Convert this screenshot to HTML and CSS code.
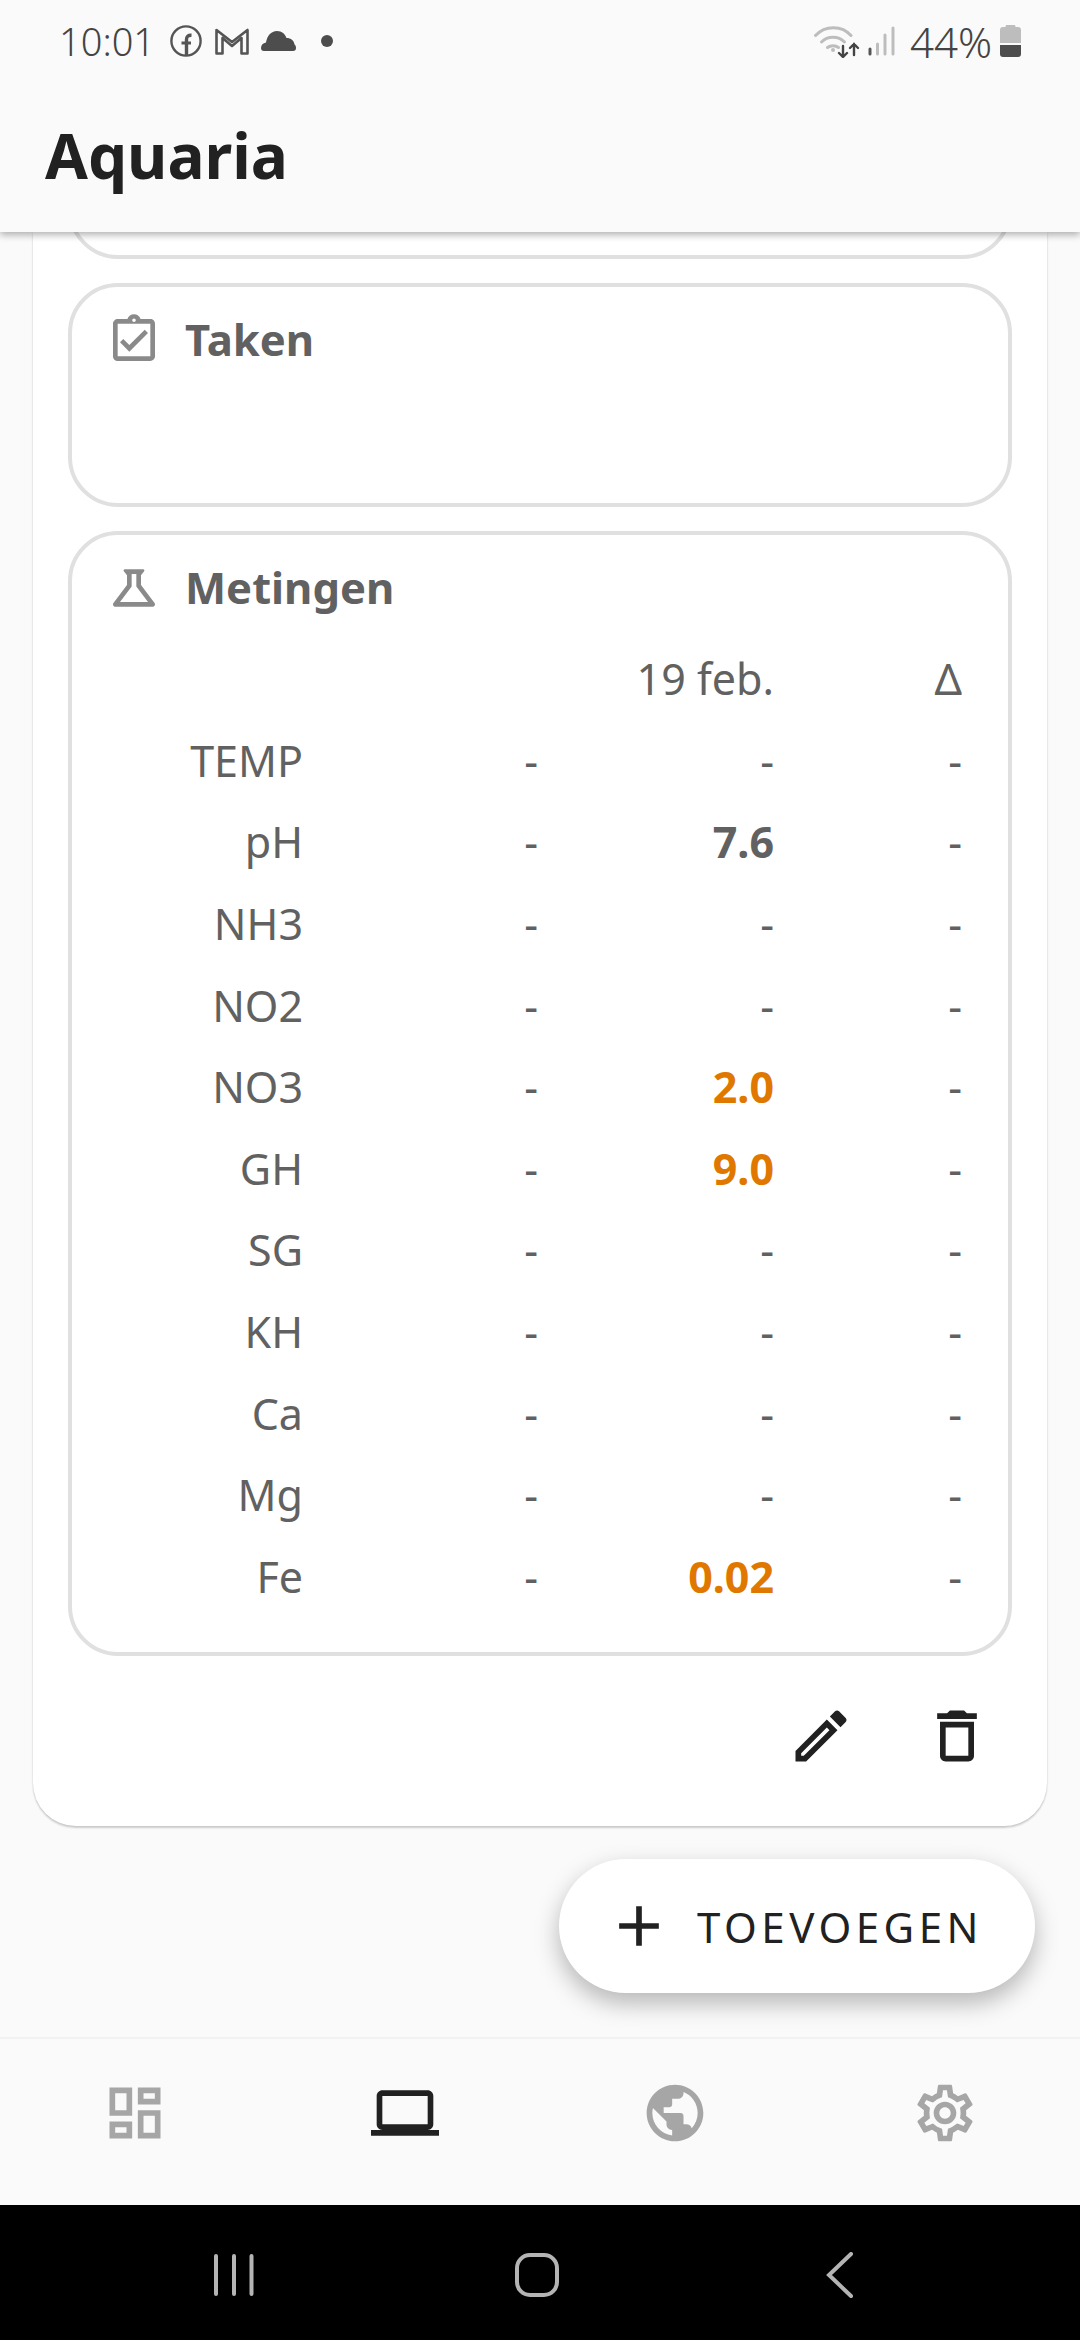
FILE: index.html
```html
<!DOCTYPE html>
<html lang="nl">
<head>
    <meta charset="UTF-8">
    <meta name="viewport" content="width=device-width, initial-scale=1.0">
    <title>Aquaria</title>
    <link rel="stylesheet" href="styles.css">
</head>
<body>
    <div class="app">
        <header class="topbar">
            <div class="status-bar">
                <div class="status-left">
                    <span class="status-text">10:01</span>
                    <svg class="st-fb" width="32" height="32" viewBox="0 0 32 32" fill="none" stroke="#555" stroke-width="2.4"><circle cx="16" cy="16" r="14.6"/><path d="M16.5 30.5V14.5c0-3 1.5-4.5 5-4.3" stroke-width="3.4"/><path d="M11.5 18h9.5" stroke-width="3"/></svg>
                    <svg class="st-mail" width="34" height="27" viewBox="0 0 34 27" fill="none" stroke="#555" stroke-width="2.6" stroke-linejoin="round"><path d="M1.5 2 17 14 32.500 2v23.500h-6V10L17 18 7.500 10v15.500h-6z"/></svg>
                    <svg class="st-cloud" width="35" height="20" viewBox="0 0 35 20" fill="#4d4d4d"><path d="M3 20c-2 0-3-1.200-3-3 0-3 2-5 5-5.500C6 5 10 0 16 0c5 0 8 3 9.500 7C30 7 33 9.500 33.500 13.500c1 .5 1.500 2 1.500 3.500 0 2-1 3-3 3z"/></svg>
                    <span class="st-dot"></span>
                </div>
                <div class="status-right">
                    <svg width="46" height="34" viewBox="0 0 46 34" fill="none" stroke-linecap="round"><g stroke="#bdbdbd" stroke-width="3"><path d="M1.500 11.500C11 1 28 1 37 11.500"/><path d="M7.500 18c6-6.500 17-6.500 23 0"/><path d="M13.500 23.500c3-2.500 8-2.500 11 0"/></g><circle cx="19" cy="26" r="2" fill="#bdbdbd"/><g stroke="#444" stroke-width="2.400"><path d="M29 22v11M25 29l4 4 4-4"/><path d="M40 31V20M36 24l4-4 4 4"/></g></svg>
                    <svg class="st-signal" width="28" height="30" viewBox="0 0 28 30" fill="none" stroke-width="3" stroke-linecap="round"><path d="M2 23v5" stroke="#555"/><path d="M9.500 18v10M17 9v19M25 2v26" stroke="#bdbdbd"/></svg>
                    <span class="status-text status-pct">44%</span>
                    <svg class="st-battery" width="21" height="32" viewBox="0 0 21 32"><path d="M7 0h7c1 0 1.500.5 1.500 2H18c2 0 3 1 3 3v13H0V5c0-2 1-3 3-3h2.500C5.500.5 6 0 7 0z" fill="#bdbdbd"/><path d="M0 20h21v9c0 2-1 3-3 3H3c-2 0-3-1-3-3z" fill="#4d4d4d"/></svg>
                </div>
            </div>
            <h1 class="page-title">Aquaria</h1>
        </header>

        <main class="content">
            <div class="panel">
                <section class="box box-stub"></section>

                <section class="box box-taken">
                    <div class="box-head">
                        <svg class="box-icon" viewBox="0 0 24 24"><path d="M18 9l-1.410-1.420L10 14.170l-2.590-2.580L6 13l4 4zm1-6h-4.180C14.400 1.840 13.300 1 12 1c-1.300 0-2.400.84-2.820 2H5c-.14 0-.27.01-.4.04-.39.08-.74.28-1.010.55-.18.18-.33.4-.43.64-.1.23-.16.49-.16.77v14c0 .27.06.54.16.78s.25.45.43.64c.27.27.62.47 1.010.55.13.02.26.03.4.03h14c1.100 0 2-.9 2-2V5c0-1.100-.9-2-2-2zm-7-.25c.41 0 .75.34.75.75s-.34.75-.75.75-.75-.34-.75-.75.34-.75.75-.75zM19 19H5V5h14v14z"/></svg>
                        <h2>Taken</h2>
                    </div>
                </section>

                <section class="box box-metingen">
                    <div class="box-head">
                        <svg class="box-icon" viewBox="0 0 24 24"><path d="M13 11.330 18 18H6l5-6.670V6h2m2.960-2H8.040c-.42 0-.65.48-.39.81L9 6.500v4.170L3.200 18.400c-.49.66-.02 1.600.8 1.600h16c.82 0 1.290-.94.8-1.600L15 10.670V6.500l1.350-1.690c.26-.33.03-.81-.39-.81z"/></svg>
                        <h2>Metingen</h2>
                    </div>
                    <div class="m-table">
                        <div class="m-row"><span></span><span></span><span>19 feb.</span><span>Δ</span></div>
                        <div class="m-row"><span>TEMP</span><span>-</span><span>-</span><span>-</span></div>
                        <div class="m-row"><span>pH</span><span>-</span><span class="val">7.6</span><span>-</span></div>
                        <div class="m-row"><span>NH3</span><span>-</span><span>-</span><span>-</span></div>
                        <div class="m-row"><span>NO2</span><span>-</span><span>-</span><span>-</span></div>
                        <div class="m-row"><span>NO3</span><span>-</span><span class="val warn">2.0</span><span>-</span></div>
                        <div class="m-row"><span>GH</span><span>-</span><span class="val warn">9.0</span><span>-</span></div>
                        <div class="m-row"><span>SG</span><span>-</span><span>-</span><span>-</span></div>
                        <div class="m-row"><span>KH</span><span>-</span><span>-</span><span>-</span></div>
                        <div class="m-row"><span>Ca</span><span>-</span><span>-</span><span>-</span></div>
                        <div class="m-row"><span>Mg</span><span>-</span><span>-</span><span>-</span></div>
                        <div class="m-row"><span>Fe</span><span>-</span><span class="val warn">0.02</span><span>-</span></div>
                    </div>
                </section>

                <div class="actions">
                    <svg class="action-icon" viewBox="0 0 24 24"><path d="M14.060 9.020l.92.92L5.920 19H5v-.92l9.060-9.060M17.660 3c-.25 0-.51.1-.7.29l-1.830 1.830 3.750 3.750 1.830-1.830c.39-.39.39-1.020 0-1.410l-2.340-2.340c-.2-.2-.45-.29-.71-.29zm-3.600 3.190L3 17.250V21h3.750L17.810 9.940l-3.750-3.750z"/></svg>
                    <svg class="action-icon" viewBox="0 0 24 24"><path d="M6 19c0 1.100.9 2 2 2h8c1.100 0 2-.9 2-2V7H6v12zM8 9h8v10H8V9zm7.500-5l-1-1h-5l-1 1H5v2h14V4h-3.500z"/></svg>
                </div>
            </div>

            <div class="fab-row">
                <a class="fab" href="#">
                    <svg class="action-icon" viewBox="0 0 24 24"><path d="M19 13h-6v6h-2v-6H5v-2h6V5h2v6h6v2z"/></svg>
                    <span>TOEVOEGEN</span>
                </a>
            </div>
        </main>

        <nav class="bottom-nav">
            <svg class="nav-icon" viewBox="0 0 24 24"><path d="M19 5v2h-4V5h4M9 5v6H5V5h4m10 8v6h-4v-6h4M9 17v2H5v-2h4M21 3h-8v6h8V3zM11 3H3v10h8V3zm10 8h-8v10h8V11zm-10 4H3v6h8v-6z"/></svg>
            <svg class="nav-icon active" viewBox="0 0 24 24"><path d="M20 18c1.100 0 1.990-.9 1.990-2L22 6c0-1.100-.9-2-2-2H4c-1.100 0-2 .9-2 2v10c0 1.100.9 2 2 2H0v2h24v-2h-4zM4 6h16v10H4V6z"/></svg>
            <svg class="nav-icon" viewBox="0 0 24 24"><path d="M12 2C6.480 2 2 6.480 2 12s4.480 10 10 10 10-4.480 10-10S17.520 2 12 2zm-1 17.930c-3.950-.49-7-3.850-7-7.930 0-.62.08-1.210.21-1.790L9 15v1c0 1.100.9 2 2 2v1.930zm6.900-2.540c-.26-.81-1-1.390-1.900-1.390h-1v-3c0-.55-.45-1-1-1H8v-2h2c.55 0 1-.45 1-1V7h2c1.100 0 2-.9 2-2v-.41c2.930 1.190 5 4.060 5 7.410 0 2.080-.8 3.970-2.100 5.390z"/></svg>
            <svg class="nav-icon" viewBox="0 0 24 24"><path d="M19.430 12.980c.04-.32.07-.64.07-.98 0-.34-.03-.66-.07-.98l2.110-1.650c.19-.15.24-.42.12-.64l-2-3.460c-.09-.16-.26-.25-.44-.25-.06 0-.12.01-.17.03l-2.490 1c-.52-.4-1.080-.73-1.690-.98l-.38-2.650C14.460 2.180 14.250 2 14 2h-4c-.25 0-.46.18-.49.42l-.38 2.650c-.61.25-1.170.59-1.690.98l-2.490-1c-.06-.02-.12-.03-.18-.03-.17 0-.34.09-.43.25l-2 3.460c-.13.22-.07.49.12.64l2.110 1.650c-.04.32-.07.65-.07.98 0 .33.03.66.07.98l-2.110 1.650c-.19.15-.24.42-.12.64l2 3.460c.09.16.26.25.44.25.06 0 .12-.01.17-.03l2.490-1c.52.4 1.080.73 1.690.98l.38 2.650c.03.24.24.42.49.42h4c.25 0 .46-.18.49-.42l.38-2.650c.61-.25 1.170-.59 1.690-.98l2.490 1c.06.02.12.03.18.03.17 0 .34-.09.43-.25l2-3.460c.12-.22.07-.49-.12-.64l-2.110-1.650zm-1.980-1.710c.04.31.05.52.05.73 0 .21-.02.43-.05.73l-.14 1.130.89.7 1.080.84-.7 1.210-1.270-.51-1.040-.42-.9.68c-.43.32-.84.56-1.250.73l-1.060.43-.16 1.130-.2 1.350h-1.400l-.19-1.350-.16-1.130-1.060-.43c-.43-.18-.83-.41-1.230-.71l-.91-.7-1.060.43-1.270.51-.7-1.210 1.080-.84.89-.7-.14-1.130c-.03-.31-.05-.54-.05-.74s.02-.43.05-.73l.14-1.130-.89-.7-1.080-.84.7-1.210 1.270.51 1.040.42.9-.68c.43-.32.84-.56 1.250-.73l1.060-.43.16-1.130.2-1.350h1.390l.19 1.350.16 1.130 1.060.43c.43.18.83.41 1.230.71l.91.7 1.060-.43 1.270-.51.7 1.210-1.070.85-.89.7.14 1.130zM12 8c-2.210 0-4 1.790-4 4s1.790 4 4 4 4-1.790 4-4-1.790-4-4-4zm0 6c-1.100 0-2-.9-2-2s.9-2 2-2 2 .9 2 2-.9 2-2 2z"/></svg>
        </nav>

        <div class="system-nav">
            <svg width="42" height="44" viewBox="0 0 42 44" fill="none" stroke="#b4b4b4" stroke-width="4" stroke-linecap="round"><path d="M3 3v38M21 3v38M38.500 3v38"/></svg>
            <svg width="44" height="44" viewBox="0 0 44 44" fill="none" stroke="#b4b4b4" stroke-width="4"><rect x="2" y="2" width="40" height="40" rx="13"/></svg>
            <svg width="28" height="46" viewBox="0 0 28 46" fill="none" stroke="#b4b4b4" stroke-width="4" stroke-linecap="round"><path d="M25 2 3 23l22 21"/></svg>
        </div>
    </div>
</body>
</html>
```

FILE: styles.css
```css
* {
    box-sizing: border-box;
}
body {
    margin: 0;
    font-family: "Noto Sans", sans-serif;
    background-color: #fafafa;
    color: #212121;
}
.app {
    width: 1080px;
    height: 2340px;
    display: flex;
    flex-direction: column;
    overflow: hidden;
}

/* top bar */
.topbar {
    height: 232px;
    flex: none;
    background-color: #fafafa;
    box-shadow: 0 3px 7px rgba(0,0,0,0.3);
    position: relative;
    z-index: 2;
}
.status-bar {
    height: 82px;
    padding: 0 59px;
    display: flex;
    justify-content: space-between;
    align-items: center;
}
.status-left,
.status-right {
    display: flex;
    align-items: center;
}
.status-text {
    font-size: 38px;
    font-weight: 300;
    color: #444;
}
.status-pct {
    font-size: 42px;
}
.st-fb {
    margin-left: 15px;
}
.st-mail {
    margin-left: 13px;
}
.st-cloud {
    margin-left: 12px;
}
.st-dot {
    width: 12px;
    height: 12px;
    margin-left: 25px;
    border-radius: 50%;
    background-color: #4d4d4d;
}
.st-signal {
    margin: 0 14px 0 8px;
}
.st-battery {
    margin-left: 8px;
}
.page-title {
    margin: 32px 0 0 45px;
    font-size: 62px;
    line-height: 82px;
    font-weight: 700;
    color: #212121;
}

/* scrolled content */
.content {
    flex: 1;
    overflow: hidden;
}
.panel {
    margin: 0 33px;
    padding: 0 35px 56px;
    background-color: #fff;
    border-radius: 0 0 43px 43px;
    box-shadow: 0 2px 2px rgba(0,0,0,0.18), 0 0 2px rgba(0,0,0,0.08);
    display: flex;
    flex-direction: column;
    gap: 24px;
}
.box {
    border: 4px solid #e0e0e0;
    border-radius: 50px;
    padding: 25px 46px 35px 34px;
}
.box-stub {
    height: 100px;
    margin-top: -73px;
}
.box-taken {
    height: 224px;
}
.box-head {
    display: flex;
    align-items: center;
    gap: 23px;
    height: 56px;
}
.box-head h2 {
    margin: -3px 0 0;
    font-size: 43.6px;
    font-weight: 700;
    color: #616161;
}
.box-icon {
    width: 56px;
    height: 56px;
    fill: #8a8a8a;
}
.m-table {
    margin-top: 22px;
}
.m-row {
    display: grid;
    grid-template-columns: 197px 235px 236px 188px;
    height: 81.6px;
    align-items: center;
    text-align: right;
    font-size: 43px;
    color: #616161;
}
.val {
    font-weight: 700;
}
.warn {
    color: #e07800;
}
.actions {
    display: flex;
    justify-content: flex-end;
    gap: 68px;
    padding-right: 21px;
    margin-top: 22px;
}
.action-icon {
    width: 68px;
    height: 68px;
    fill: #212121;
}

/* floating button */
.fab-row {
    display: flex;
    justify-content: flex-end;
    padding: 33px 45px 0 0;
}
.fab {
    width: 476px;
    height: 134px;
    padding-left: 46px;
    display: flex;
    align-items: center;
    gap: 24px;
    background-color: #fff;
    border-radius: 67px;
    box-shadow: 0 10px 24px rgba(0,0,0,0.28);
    font-size: 42px;
    letter-spacing: 4.5px;
    color: #212121;
    text-decoration: none;
}

/* bottom navigation */
.bottom-nav {
    height: 168px;
    flex: none;
    display: grid;
    grid-template-columns: repeat(4, 270px);
    justify-items: center;
    align-items: center;
    padding-bottom: 18px;
    border-top: 2px solid #f2f2f2;
    background-color: #fafafa;
}
.nav-icon {
    width: 68px;
    height: 68px;
    fill: #a6a6a6;
}
.nav-icon.active {
    fill: #212121;
}
.system-nav {
    height: 135px;
    flex: none;
    padding: 5px 89px 0 83px;
    display: grid;
    grid-template-columns: repeat(3, 1fr);
    justify-items: center;
    align-items: center;
    background-color: #000;
}
```
